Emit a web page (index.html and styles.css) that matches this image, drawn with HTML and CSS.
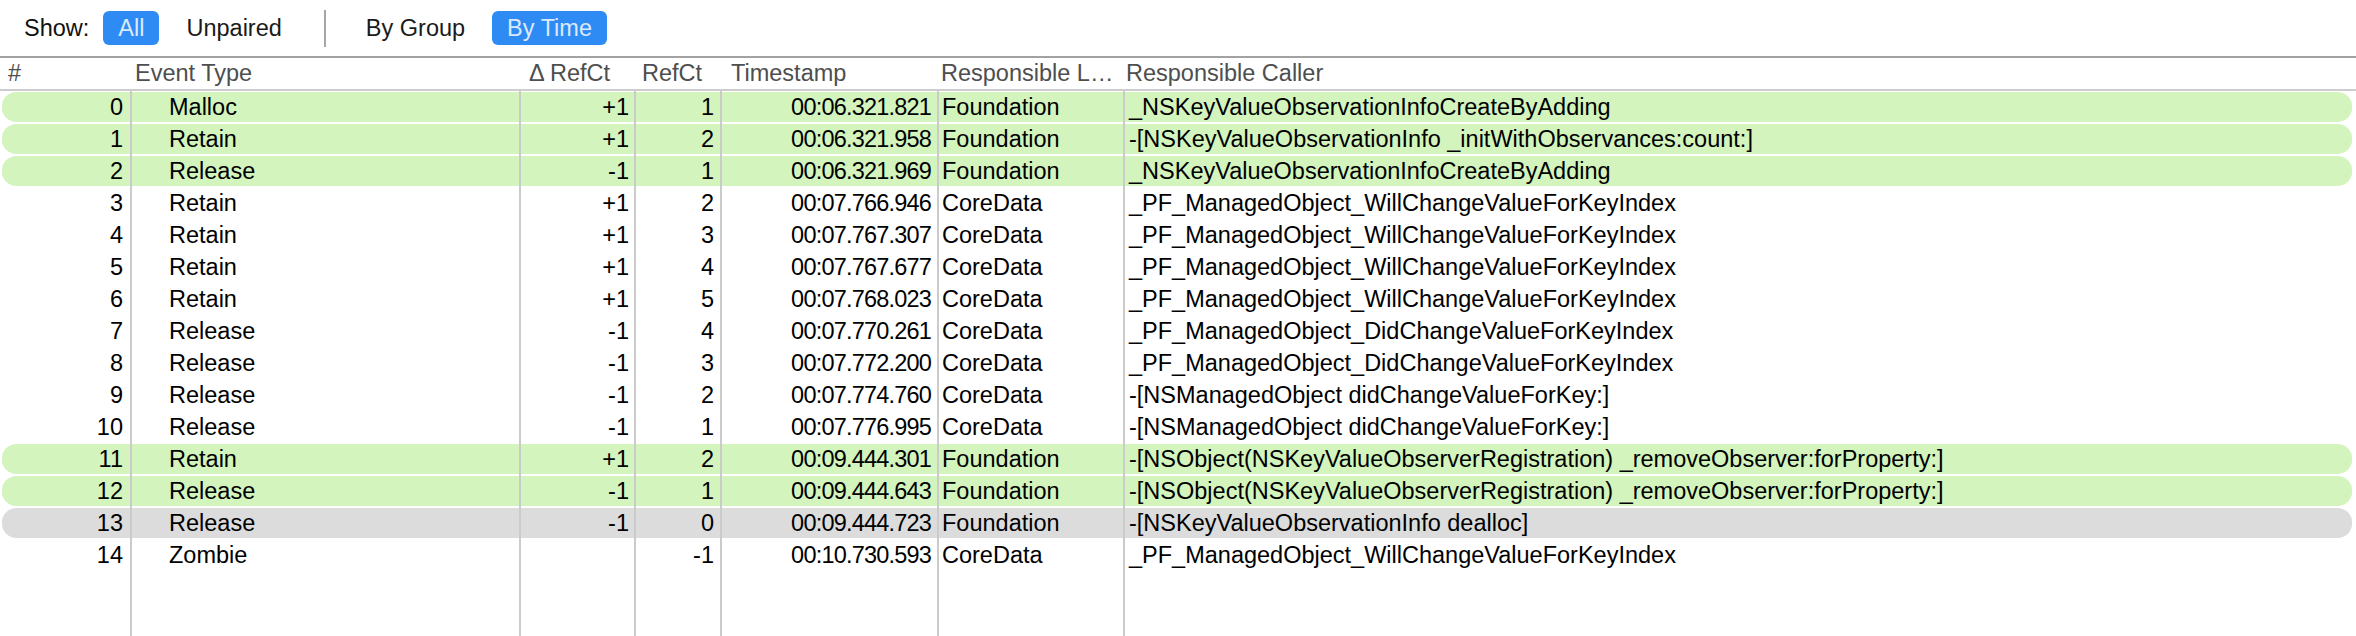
FILE: index.html
```html
<!DOCTYPE html>
<html>
<head>
<meta charset="utf-8">
<link rel="stylesheet" href="styles.css">
</head>
<body>
<div class="app">
  <div class="toolbar">
    <span class="label">Show:</span>
    <div class="seg">
      <span class="btn on">All</span>
      <span class="btn">Unpaired</span>
    </div>
    <span class="sep"></span>
    <div class="seg">
      <span class="btn">By Group</span>
      <span class="btn on">By Time</span>
    </div>
  </div>

  <div class="header">
    <div class="h h-num">#</div>
    <div class="h h-type">Event Type</div>
    <div class="h h-delta">Δ RefCt</div>
    <div class="h h-ref">RefCt</div>
    <div class="h h-time">Timestamp</div>
    <div class="h h-lib">Responsible L…</div>
    <div class="h h-caller">Responsible Caller</div>
  </div>

  <div class="tbody">
    <div class="row hl">
      <div class="c c-num"><div class="in">0</div></div>
      <div class="c c-type"><div class="in">Malloc</div></div>
      <div class="c c-delta"><div class="in">+1</div></div>
      <div class="c c-ref"><div class="in">1</div></div>
      <div class="c c-time"><div class="in">00:06.321.821</div></div>
      <div class="c c-lib"><div class="in">Foundation</div></div>
      <div class="c c-caller"><div class="in">_NSKeyValueObservationInfoCreateByAdding</div></div>
    </div>
    <div class="row hl">
      <div class="c c-num"><div class="in">1</div></div>
      <div class="c c-type"><div class="in">Retain</div></div>
      <div class="c c-delta"><div class="in">+1</div></div>
      <div class="c c-ref"><div class="in">2</div></div>
      <div class="c c-time"><div class="in">00:06.321.958</div></div>
      <div class="c c-lib"><div class="in">Foundation</div></div>
      <div class="c c-caller"><div class="in">-[NSKeyValueObservationInfo _initWithObservances:count:]</div></div>
    </div>
    <div class="row hl">
      <div class="c c-num"><div class="in">2</div></div>
      <div class="c c-type"><div class="in">Release</div></div>
      <div class="c c-delta"><div class="in">-1</div></div>
      <div class="c c-ref"><div class="in">1</div></div>
      <div class="c c-time"><div class="in">00:06.321.969</div></div>
      <div class="c c-lib"><div class="in">Foundation</div></div>
      <div class="c c-caller"><div class="in">_NSKeyValueObservationInfoCreateByAdding</div></div>
    </div>
    <div class="row">
      <div class="c c-num"><div class="in">3</div></div>
      <div class="c c-type"><div class="in">Retain</div></div>
      <div class="c c-delta"><div class="in">+1</div></div>
      <div class="c c-ref"><div class="in">2</div></div>
      <div class="c c-time"><div class="in">00:07.766.946</div></div>
      <div class="c c-lib"><div class="in">CoreData</div></div>
      <div class="c c-caller"><div class="in">_PF_ManagedObject_WillChangeValueForKeyIndex</div></div>
    </div>
    <div class="row">
      <div class="c c-num"><div class="in">4</div></div>
      <div class="c c-type"><div class="in">Retain</div></div>
      <div class="c c-delta"><div class="in">+1</div></div>
      <div class="c c-ref"><div class="in">3</div></div>
      <div class="c c-time"><div class="in">00:07.767.307</div></div>
      <div class="c c-lib"><div class="in">CoreData</div></div>
      <div class="c c-caller"><div class="in">_PF_ManagedObject_WillChangeValueForKeyIndex</div></div>
    </div>
    <div class="row">
      <div class="c c-num"><div class="in">5</div></div>
      <div class="c c-type"><div class="in">Retain</div></div>
      <div class="c c-delta"><div class="in">+1</div></div>
      <div class="c c-ref"><div class="in">4</div></div>
      <div class="c c-time"><div class="in">00:07.767.677</div></div>
      <div class="c c-lib"><div class="in">CoreData</div></div>
      <div class="c c-caller"><div class="in">_PF_ManagedObject_WillChangeValueForKeyIndex</div></div>
    </div>
    <div class="row">
      <div class="c c-num"><div class="in">6</div></div>
      <div class="c c-type"><div class="in">Retain</div></div>
      <div class="c c-delta"><div class="in">+1</div></div>
      <div class="c c-ref"><div class="in">5</div></div>
      <div class="c c-time"><div class="in">00:07.768.023</div></div>
      <div class="c c-lib"><div class="in">CoreData</div></div>
      <div class="c c-caller"><div class="in">_PF_ManagedObject_WillChangeValueForKeyIndex</div></div>
    </div>
    <div class="row">
      <div class="c c-num"><div class="in">7</div></div>
      <div class="c c-type"><div class="in">Release</div></div>
      <div class="c c-delta"><div class="in">-1</div></div>
      <div class="c c-ref"><div class="in">4</div></div>
      <div class="c c-time"><div class="in">00:07.770.261</div></div>
      <div class="c c-lib"><div class="in">CoreData</div></div>
      <div class="c c-caller"><div class="in">_PF_ManagedObject_DidChangeValueForKeyIndex</div></div>
    </div>
    <div class="row">
      <div class="c c-num"><div class="in">8</div></div>
      <div class="c c-type"><div class="in">Release</div></div>
      <div class="c c-delta"><div class="in">-1</div></div>
      <div class="c c-ref"><div class="in">3</div></div>
      <div class="c c-time"><div class="in">00:07.772.200</div></div>
      <div class="c c-lib"><div class="in">CoreData</div></div>
      <div class="c c-caller"><div class="in">_PF_ManagedObject_DidChangeValueForKeyIndex</div></div>
    </div>
    <div class="row">
      <div class="c c-num"><div class="in">9</div></div>
      <div class="c c-type"><div class="in">Release</div></div>
      <div class="c c-delta"><div class="in">-1</div></div>
      <div class="c c-ref"><div class="in">2</div></div>
      <div class="c c-time"><div class="in">00:07.774.760</div></div>
      <div class="c c-lib"><div class="in">CoreData</div></div>
      <div class="c c-caller"><div class="in">-[NSManagedObject didChangeValueForKey:]</div></div>
    </div>
    <div class="row">
      <div class="c c-num"><div class="in">10</div></div>
      <div class="c c-type"><div class="in">Release</div></div>
      <div class="c c-delta"><div class="in">-1</div></div>
      <div class="c c-ref"><div class="in">1</div></div>
      <div class="c c-time"><div class="in">00:07.776.995</div></div>
      <div class="c c-lib"><div class="in">CoreData</div></div>
      <div class="c c-caller"><div class="in">-[NSManagedObject didChangeValueForKey:]</div></div>
    </div>
    <div class="row hl">
      <div class="c c-num"><div class="in">11</div></div>
      <div class="c c-type"><div class="in">Retain</div></div>
      <div class="c c-delta"><div class="in">+1</div></div>
      <div class="c c-ref"><div class="in">2</div></div>
      <div class="c c-time"><div class="in">00:09.444.301</div></div>
      <div class="c c-lib"><div class="in">Foundation</div></div>
      <div class="c c-caller"><div class="in">-[NSObject(NSKeyValueObserverRegistration) _removeObserver:forProperty:]</div></div>
    </div>
    <div class="row hl">
      <div class="c c-num"><div class="in">12</div></div>
      <div class="c c-type"><div class="in">Release</div></div>
      <div class="c c-delta"><div class="in">-1</div></div>
      <div class="c c-ref"><div class="in">1</div></div>
      <div class="c c-time"><div class="in">00:09.444.643</div></div>
      <div class="c c-lib"><div class="in">Foundation</div></div>
      <div class="c c-caller"><div class="in">-[NSObject(NSKeyValueObserverRegistration) _removeObserver:forProperty:]</div></div>
    </div>
    <div class="row sel">
      <div class="c c-num"><div class="in">13</div></div>
      <div class="c c-type"><div class="in">Release</div></div>
      <div class="c c-delta"><div class="in">-1</div></div>
      <div class="c c-ref"><div class="in">0</div></div>
      <div class="c c-time"><div class="in">00:09.444.723</div></div>
      <div class="c c-lib"><div class="in">Foundation</div></div>
      <div class="c c-caller"><div class="in">-[NSKeyValueObservationInfo dealloc]</div></div>
    </div>
    <div class="row">
      <div class="c c-num"><div class="in">14</div></div>
      <div class="c c-type"><div class="in">Zombie</div></div>
      <div class="c c-delta"><div class="in"></div></div>
      <div class="c c-ref"><div class="in">-1</div></div>
      <div class="c c-time"><div class="in">00:10.730.593</div></div>
      <div class="c c-lib"><div class="in">CoreData</div></div>
      <div class="c c-caller"><div class="in">_PF_ManagedObject_WillChangeValueForKeyIndex</div></div>
    </div>
    <div class="row filler">
      <div class="c"></div>
      <div class="c"></div>
      <div class="c"></div>
      <div class="c"></div>
      <div class="c"></div>
      <div class="c"></div>
      <div class="c c-caller"></div>
    </div>
  </div>
</div>
</body>
</html>
```

FILE: styles.css
```css
* { box-sizing: border-box; }

html, body {
  margin: 0;
  padding: 0;
  background: #ffffff;
}

body {
  font-family: "Liberation Sans", Arial, Helvetica, sans-serif;
  font-size: 23.5px;
  color: #000;
  overflow: hidden;
}

.app {
  height: 636px;
  display: flex;
  flex-direction: column;
}

/* Toolbar */
.toolbar {
  height: 56px;
  flex: 0 0 56px;
  display: flex;
  align-items: center;
  padding-left: 24px;
}

.label {
  margin-right: 14px;
  color: #111;
}

.seg {
  display: flex;
  gap: 12px;
}

.btn {
  height: 34px;
  padding: 0 15px;
  display: flex;
  align-items: center;
  border-radius: 6px;
  color: #1a1a1a;
}

.btn.on {
  background: #2f8bf4;
  color: #dce9fd;
}

.sep {
  width: 2px;
  height: 37px;
  background: #a6a6a6;
  margin: 0 25px 0 27px;
}

/* Header */
.header {
  flex: 0 0 35px;
  height: 35px;
  border-top: 2px solid #a2a2a2;
  border-bottom: 2px solid #cdcdcd;
  display: grid;
  grid-template-columns: 130px 389px 115px 86px 217px 186px 1fr;
  padding-left: 2px;
  color: #4e4e4e;
}

.h {
  display: flex;
  align-items: center;
  white-space: nowrap;
  overflow: hidden;
}

.h-num { padding-left: 6px; }
.h-type { padding-left: 3px; }
.h-delta { padding-left: 8px; }
.h-ref { padding-left: 6px; }
.h-time { padding-left: 9px; }
.h-lib { padding-left: 2px; }
.h-caller { padding-left: 1px; }

/* Body */
.tbody {
  flex: 1 1 auto;
  display: flex;
  flex-direction: column;
  padding: 0 4px 0 2px;
  overflow: hidden;
}

.row {
  display: grid;
  grid-template-columns: 130px 389px 115px 86px 217px 186px 1fr;
  height: 32px;
  flex: 0 0 32px;
}

.row.filler {
  flex: 1 1 auto;
  height: auto;
}

.c {
  padding: 1px 0;
  border-right: 2px solid #cbcbcb;
  background-clip: content-box;
  min-width: 0;
}

.c.c-caller {
  border-right: none;
}

.row.hl .c { background-color: #d3f4bd; }
.row.sel .c { background-color: #dcdcdc; }

.row .c:first-child { border-radius: 15px 0 0 15px; }
.row .c:last-child { border-radius: 0 15px 15px 0; }

.in {
  height: 30px;
  display: flex;
  align-items: center;
  white-space: nowrap;
  overflow: hidden;
}

.c-num .in { justify-content: flex-end; padding-right: 7px; }
.c-type .in { padding-left: 37px; }
.c-delta .in { justify-content: flex-end; padding-right: 5px; }
.c-ref .in { justify-content: flex-end; padding-right: 6px; }
.c-time .in { justify-content: flex-end; padding-right: 6px; letter-spacing: -0.8px; }
.c-lib .in { padding-left: 3px; }
.c-caller .in { padding-left: 4px; }
```
